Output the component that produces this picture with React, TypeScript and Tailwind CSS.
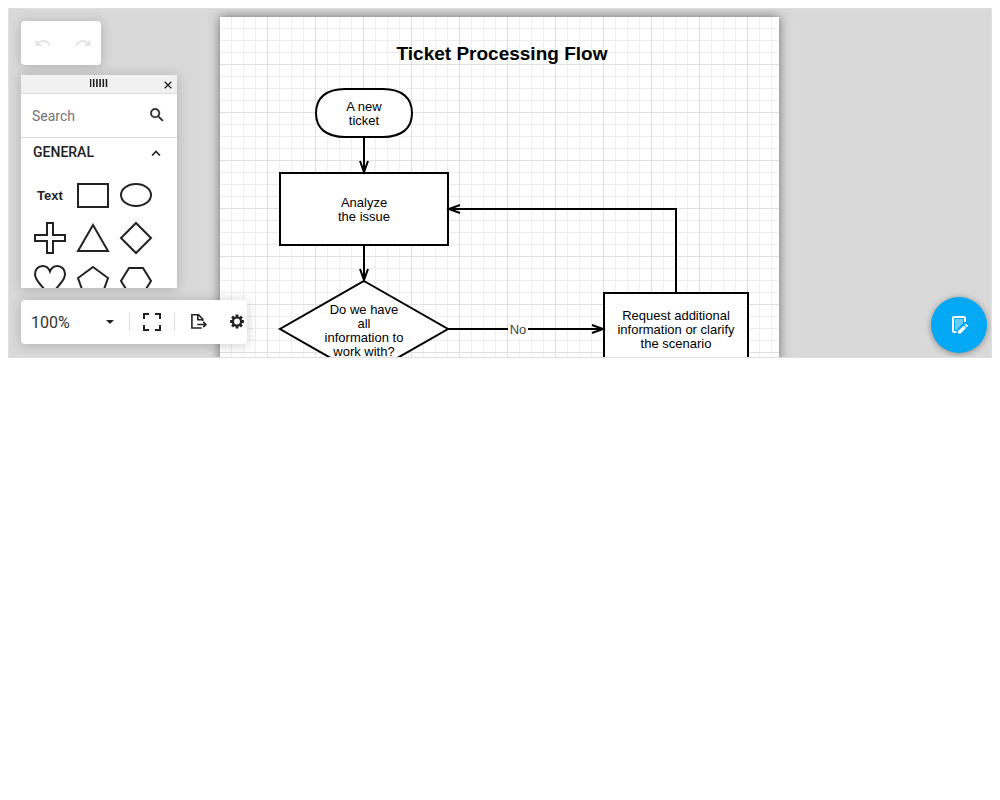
import type { ReactNode } from "react";

const INK = "#222222";

function Label({ x, y, lines }: { x: number; y: number; lines: string[] }) {
  return (
    <text textAnchor="middle" className="fill-black text-[13px]">
      {lines.map((line, i) => (
        <tspan key={line} x={x} y={y + i * 14}>
          {line}
        </tspan>
      ))}
    </text>
  );
}

function Diagram() {
  return (
    <svg
      viewBox="220 17 559 792"
      className="block h-[792px] w-[559px] bg-white font-['Liberation_Sans',sans-serif]"
      role="img"
      aria-label="Ticket Processing Flow"
    >
      <defs>
        <pattern id="grid" x="219" y="16" width="48" height="48" patternUnits="userSpaceOnUse">
          <path
            d="M12.5 0V48M24.5 0V48M36.5 0V48M0 12.5H48M0 24.5H48M0 36.5H48"
            stroke="#eeeeee"
            fill="none"
          />
          <path d="M0.5 0V48M0 0.5H48" stroke="#e0e0e0" fill="none" />
        </pattern>
      </defs>
      <rect x="220" y="17" width="559" height="792" fill="url(#grid)" />
      <text x="502" y="60" textAnchor="middle" className="fill-black text-[19px] font-bold">
        Ticket Processing Flow
      </text>
      <g stroke="#000" strokeWidth="2" fill="#fff">
        <path d="M345 89H383C402 89 412 98 412 113C412 128 402 137 383 137H345C326 137 316 128 316 113C316 98 326 89 345 89Z" />
        <rect x="280" y="173" width="168" height="72" />
        <path d="M364 281L448 329L364 377L280 329Z" />
        <rect x="604" y="293" width="144" height="72" />
        <g fill="none">
          <path d="M364 137V172M360 161L364 172L368 161" />
          <path d="M364 245V280M360 269L364 280L368 269" />
          <path d="M448 329H508M528 329H603M592 325L603 329L592 333" />
          <path d="M676 293V209H449M460 205L449 209L460 213" />
        </g>
      </g>
      <rect x="508" y="320" width="20" height="18" fill="#fff" />
      <text x="518" y="334" textAnchor="middle" className="fill-[#444444] text-[13px]">
        No
      </text>
      <Label x={364} y={111} lines={["A new", "ticket"]} />
      <Label x={364} y={207} lines={["Analyze", "the issue"]} />
      <Label x={364} y={314} lines={["Do we have", "all", "information to", "work with?"]} />
      <Label x={676} y={320} lines={["Request additional", "information or clarify", "the scenario"]} />
    </svg>
  );
}

const shapes: { name: string; art: ReactNode }[] = [
  {
    name: "Text",
    art: (
      <text
        x="16"
        y="21"
        textAnchor="middle"
        fill={INK}
        stroke="none"
        className="font-['Liberation_Sans',sans-serif] text-[13px] font-bold"
      >
        Text
      </text>
    ),
  },
  { name: "Rectangle", art: <rect x="1" y="5" width="30" height="23" /> },
  { name: "Ellipse", art: <ellipse cx="16" cy="16" rx="15" ry="11" /> },
  { name: "Cross", art: <path d="M13 1H19V13H31V19H19V31H13V19H1V13H13Z" /> },
  { name: "Triangle", art: <path d="M16 3L31 29H1Z" /> },
  { name: "Diamond", art: <path d="M16 1L31 16L16 31L1 16Z" /> },
  {
    name: "Heart",
    art: <path d="M16 6.500C14.500 2.500 12 1 8.700 1C4.300 1 1 4.500 1 9C1 13 3 15.500 5.500 18.500L16 31L26.500 18.500C29 15.500 31 13 31 9C31 4.500 27.700 1 23.300 1C20 1 17.500 2.500 16 6.500Z" />,
  },
  { name: "Pentagon", art: <path d="M16 2L31 13L25 30H7L1 13Z" /> },
  { name: "Hexagon", art: <path d="M9 3H23L31 16L23 29H9L1 16Z" /> },
];

function HistoryBar() {
  return (
    <div className="flex h-11 w-20 rounded bg-white shadow-[0_1px_12px_rgba(0,0,0,0.2)]">
      <button type="button" disabled aria-label="Undo" className="flex w-10 items-center justify-center pl-1">
        <svg viewBox="0 0 24 24" className="size-[18px]" fill="#e4e4e4">
          <path d="M12.500 8c-2.650 0-5.050.99-6.900 2.600L2 7v9h9l-3.620-3.620c1.390-1.160 3.160-1.880 5.120-1.880 3.540 0 6.550 2.310 7.600 5.500l2.370-.78C21.080 11.030 17.150 8 12.500 8z" />
        </svg>
      </button>
      <button type="button" disabled aria-label="Redo" className="flex w-10 items-center justify-center pl-1">
        <svg viewBox="0 0 24 24" className="size-[18px]" fill="#e4e4e4">
          <path d="M18.400 10.600C16.550 8.990 14.150 8 11.500 8c-4.650 0-8.580 3.030-9.960 7.220L3.900 16c1.050-3.190 4.050-5.500 7.600-5.500 1.950 0 3.730.72 5.120 1.880L13 16h9V7l-3.600 3.600z" />
        </svg>
      </button>
    </div>
  );
}

function Toolbox() {
  return (
    <section
      aria-label="Shapes"
      className="flex h-[213px] w-[156px] flex-col overflow-hidden bg-white shadow-[0_1px_12px_rgba(0,0,0,0.2)]"
    >
      <header className="grid h-[19px] shrink-0 grid-cols-[18px_1fr_18px] items-center border-b border-[#dddddd] bg-[#f1f1f1]">
        <svg viewBox="1.300 0 18 8" className="col-start-2 mb-0.5 h-2 w-[18px] justify-self-center" fill={INK}>
          <path d="M1 0h1.600v8H1zM4.200 0h1.600v8H4.200zM7.400 0h1.600v8H7.400zM10.600 0h1.600v8H10.600zM13.800 0h1.600v8H13.800zM17 0h1.600v8H17z" />
        </svg>
        <button type="button" aria-label="Close" className="flex h-full items-center justify-center pt-px">
          <svg viewBox="0 0 8 8" className="size-2" stroke={INK} strokeWidth="1.300">
            <path d="M0.700 0.700L7.300 7.300M7.300 0.700L0.700 7.300" />
          </svg>
        </button>
      </header>
      <div className="flex h-11 shrink-0 items-center border-b border-[#dddddd] px-[11px]">
        <input
          type="text"
          aria-label="Search"
          placeholder="Search"
          className="w-full min-w-0 flex-1 bg-transparent text-sm text-[#222222] outline-none placeholder:text-[#757575]"
        />
        <svg
          viewBox="0 0 24 24"
          className="mb-px size-[18px] shrink-0"
          fill={INK}
          stroke={INK}
          strokeWidth="0.400"
        >
          <path d="M15.500 14h-.79l-.28-.27A6.470 6.470 0 0 0 16 9.500 6.500 6.500 0 1 0 9.500 16c1.610 0 3.090-.59 4.230-1.570l.27.28v.79l5 4.990L20.490 19zm-6 0C7.010 14 5 11.990 5 9.500S7.010 5 9.500 5 14 7.010 14 9.500 11.990 14 9.500 14" />
        </svg>
      </div>
      <button
        type="button"
        aria-expanded="true"
        className="flex h-7 shrink-0 items-center justify-between pr-4 pl-3 text-sm font-medium text-[#222222]"
      >
        GENERAL
        <svg viewBox="0 0 10 6" className="mt-0.5 h-1.5 w-2.5" fill="none" stroke={INK} strokeWidth="1.600">
          <path d="M1 5.500L5 1.500L9 5.500" />
        </svg>
      </button>
      <div className="mt-[13px] ml-[13px] grid grid-cols-[32px_32px_32px] gap-[11px]">
        {shapes.map((shape) => (
          <button key={shape.name} type="button" aria-label={shape.name} className="size-8">
            <svg viewBox="0 0 32 32" className="size-8 overflow-visible" fill="none" stroke={INK} strokeWidth="2">
              {shape.art}
            </svg>
          </button>
        ))}
      </div>
    </section>
  );
}

function ViewBar() {
  return (
    <div
      role="toolbar"
      aria-label="View"
      className="flex h-11 w-[226px] items-center overflow-hidden rounded bg-white text-[#222222] shadow-[0_1px_12px_rgba(0,0,0,0.2)]"
    >
      <button
        type="button"
        aria-label="Zoom level 100%"
        className="flex h-full w-[108px] shrink-0 items-center justify-between pr-[15px] pl-2.5 text-base text-[#333333]"
      >
        <span className="pt-0.5">100%</span>
        <svg viewBox="0 0 8 4" className="h-1 w-2" fill={INK}>
          <path d="M0 0H8L4 4Z" />
        </svg>
      </button>
      <span className="h-[18px] w-px shrink-0 bg-[#dddddd]" />
      <button type="button" aria-label="Full screen" className="flex h-full w-11 shrink-0 items-center justify-center">
        <svg viewBox="0 0 18 18" className="size-[18px]" fill="none" stroke={INK} strokeWidth="2">
          <path d="M1 6V1H6M12 1H17V6M17 12V17H12M6 17H1V12" />
        </svg>
      </button>
      <span className="h-[18px] w-px shrink-0 bg-[#dddddd]" />
      <button type="button" aria-label="Export" className="flex h-full w-12 shrink-0 items-center justify-center">
        <svg viewBox="0 0 18 18" className="size-[18px]" fill="none" stroke={INK} strokeWidth="1.600">
          <path d="M11.700 15H1.900V1.800H8.500L12.700 6V8M7.800 2V6.700H12.500M7.300 11.500H16M13.300 8.900L15.900 11.500L13.300 14.100" />
        </svg>
      </button>
      <button type="button" aria-label="Properties" className="flex h-full w-7 shrink-0 items-center justify-center">
        <svg viewBox="-9 -8.500 18 18" className="size-[18px]" fill="none" stroke={INK}>
          <circle r="4.100" strokeWidth="2.300" />
          <path
            d="M0 -6.900V-4.500M0 6.900V4.500M-6.900 0H-4.500M6.900 0H4.500M-4.900 -4.900L-3.300 -3.300M4.900 4.900L3.300 3.300M-4.900 4.900L-3.300 3.300M4.900 -4.900L3.300 -3.300"
            strokeWidth="2.800"
          />
        </svg>
      </button>
    </div>
  );
}

export default function App() {
  return (
    <main className="p-2 font-[Roboto,sans-serif]">
      <div className="relative grid h-[350px] grid-cols-1 grid-rows-1 overflow-hidden border border-[#e0e0e0] bg-[#d9d9d9]">
        <div className="col-start-1 row-start-1 flex min-h-0 justify-center overflow-hidden pt-2 pr-px">
          <div className="h-[792px] shrink-0 shadow-[0_0_10px_rgba(0,0,0,0.5)]">
            <Diagram />
          </div>
        </div>
        <div className="z-10 col-start-1 row-start-1 flex flex-col items-start p-3">
          <HistoryBar />
          <div className="mt-2.5 mb-3">
            <Toolbox />
          </div>
          <ViewBar />
        </div>
        <button
          type="button"
          aria-label="Edit properties"
          className="absolute right-1 bottom-1 z-10 flex size-14 items-center justify-center rounded-full bg-[#03a9f4] shadow-[0_1px_6px_rgba(0,0,0,0.4)]"
        >
          <svg viewBox="0 0 20 20" className="size-5" fill="none" stroke="#fff">
            <path d="M6 4H14V8.500L8.500 13.500V15H6Z" fill="#68cbf8" stroke="none" />
            <path d="M16 7V3C16 2.400 15.600 2 15 2H5C4.400 2 4 2.400 4 3V16C4 16.600 4.400 17 5 17H7.500" strokeWidth="2" />
            <path d="M9 18.500V16L14.800 10.800L17 13L11.500 18.500ZM15.600 10L17 8.800L19.200 11L17.800 12.200Z" fill="#fff" stroke="none" />
          </svg>
        </button>
      </div>
    </main>
  );
}
